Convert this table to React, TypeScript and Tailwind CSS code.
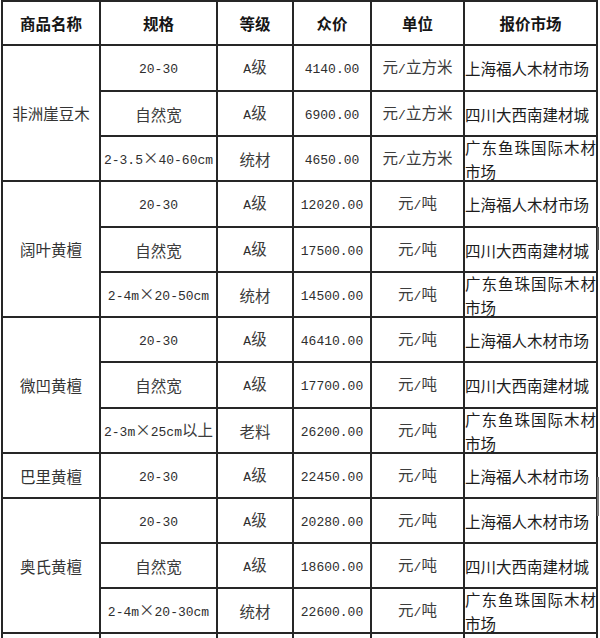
import React from "react";

type Item = [string, string, string, string, string];
type Group = { name: string; items: Item[] };

const groups: Group[] = [
  {
    name: "非洲崖豆木",
    items: [
      ["20-30", "A级", "4140.00", "元/立方米", "上海福人木材市场"],
      ["自然宽", "A级", "6900.00", "元/立方米", "四川大西南建材城"],
      ["2-3.5×40-60cm", "统材", "4650.00", "元/立方米", "广东鱼珠国际木材市场"],
    ],
  },
  {
    name: "阔叶黄檀",
    items: [
      ["20-30", "A级", "12020.00", "元/吨", "上海福人木材市场"],
      ["自然宽", "A级", "17500.00", "元/吨", "四川大西南建材城"],
      ["2-4m×20-50cm", "统材", "14500.00", "元/吨", "广东鱼珠国际木材市场"],
    ],
  },
  {
    name: "微凹黄檀",
    items: [
      ["20-30", "A级", "46410.00", "元/吨", "上海福人木材市场"],
      ["自然宽", "A级", "17700.00", "元/吨", "四川大西南建材城"],
      ["2-3m×25cm以上", "老料", "26200.00", "元/吨", "广东鱼珠国际木材市场"],
    ],
  },
  {
    name: "巴里黄檀",
    items: [["20-30", "A级", "22450.00", "元/吨", "上海福人木材市场"]],
  },
  {
    name: "奥氏黄檀",
    items: [
      ["20-30", "A级", "20280.00", "元/吨", "上海福人木材市场"],
      ["自然宽", "A级", "18600.00", "元/吨", "四川大西南建材城"],
      ["2-4m×20-30cm", "统材", "22600.00", "元/吨", "广东鱼珠国际木材市场"],
    ],
  },
  {
    name: "",
    items: [["", "", "", "", ""]],
  },
];

const rowHeights = [46, 45, 45, 46, 45, 45, 45, 46, 45, 45, 45, 45, 45, 45, 45];

function Mixed({ t }: { t: string }) {
  const parts = t.match(/[\x20-\x7e]+|×|[^\x20-\x7e×]+/g) || [];
  return (
    <>
      {parts.map((p, i) => {
        if (/^[\x20-\x7e]+$/.test(p)) {
          return (
            <span key={i} className="font-['Liberation_Mono',monospace] text-[13px] text-[#2e2e2e]">
              {p}
            </span>
          );
        }
        if (p === "×") {
          return (
            <span key={i} className="inline-block w-[15.5px] text-center">
              ×
            </span>
          );
        }
        return <span key={i}>{p}</span>;
      })}
    </>
  );
}

const cellBase = "border-2 border-[#262626] p-0 text-center align-middle";

export default function App() {
  let rowIndex = 0;
  return (
    <div className="relative w-[600px] bg-white font-['Noto_Sans_CJK_SC',sans-serif] text-[15.5px] leading-[20px] text-[#3c3c3c]">
      <table className="ml-[1px] w-[595px] table-fixed border-collapse">
        <colgroup>
          <col className="w-[98px]" />
          <col className="w-[117px]" />
          <col className="w-[76px]" />
          <col className="w-[78px]" />
          <col className="w-[93px]" />
          <col className="w-[133px]" />
        </colgroup>
        <thead>
          <tr className="h-[44px]">
            {["商品名称", "规格", "等级", "众价", "单位", "报价市场"].map((h) => (
              <th key={h} className={`${cellBase} font-bold text-[#151515]`}>
                {h}
              </th>
            ))}
          </tr>
        </thead>
        <tbody>
          {groups.map((g, gi) =>
            g.items.map((it, i) => {
              const h = rowHeights[rowIndex++] ?? 45;
              return (
                <tr key={gi + "-" + i} style={{ height: h }}>
                  {i === 0 && (
                    <td rowSpan={g.items.length} className={`${cellBase} text-[#333]`}>
                      {g.name}
                    </td>
                  )}
                  <td className={`${cellBase} whitespace-nowrap`}>
                    <Mixed t={it[0]} />
                  </td>
                  <td className={cellBase}>
                    <Mixed t={it[1]} />
                  </td>
                  <td className={cellBase}>
                    <Mixed t={it[2]} />
                  </td>
                  <td className={`${cellBase} whitespace-nowrap`}>
                    <Mixed t={it[3]} />
                  </td>
                  <td className={`${cellBase} text-justify text-[#1c1c1c]`}>
                    <div className="-my-[6px] leading-[24px]">{it[4]}</div>
                  </td>
                </tr>
              );
            })
          )}
        </tbody>
      </table>
      <div className="absolute left-[597px] top-[227px] h-[23px] w-[2px] bg-[#555]" />
      <div className="absolute left-[597px] top-[477px] h-[39px] w-[2px] bg-[#777]" />
    </div>
  );
}
